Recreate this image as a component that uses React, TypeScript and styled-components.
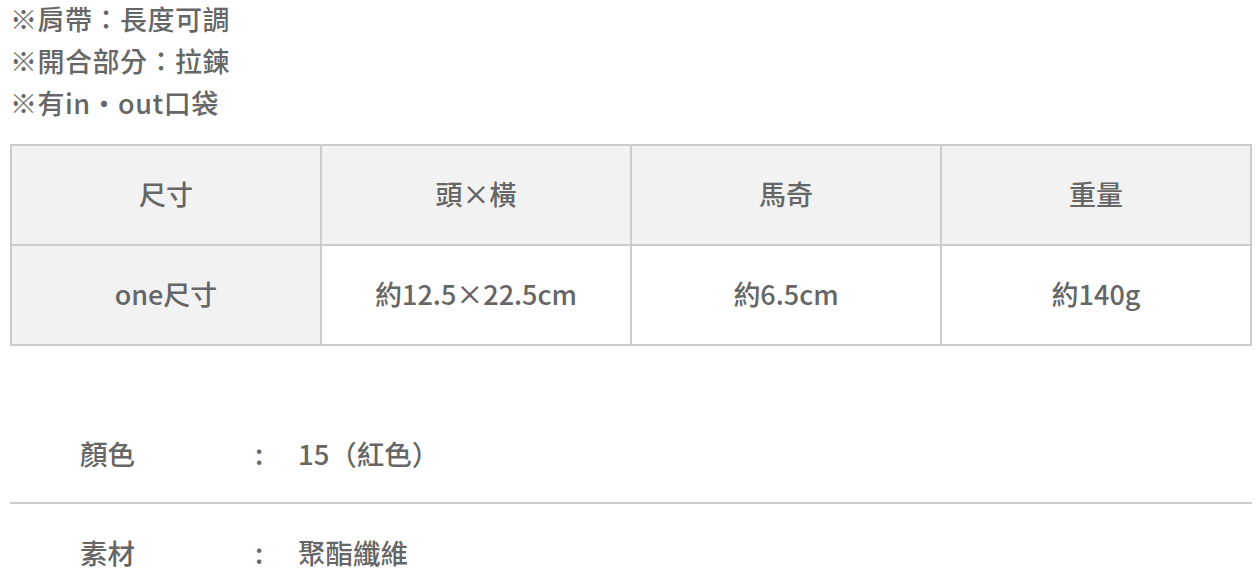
import React from 'react';
import styled, { createGlobalStyle } from 'styled-components';

const GlobalStyle = createGlobalStyle`
  html, body {
    margin: 0;
    padding: 0;
    background: #fff;
  }
  body {
    font-family: "Noto Sans CJK TC", "Noto Sans", sans-serif;
    color: #666;
  }
`;

const Page = styled.div`
  padding: 0 6px 0 10px;
`;

const NoteList = styled.ul`
  list-style: none;
  margin: -2px 0 0;
  padding: 0;
`;

const Note = styled.li`
  font-size: 27px;
  font-weight: 500;
  line-height: 42px;
  letter-spacing: 0.5px;
`;

const SpecTable = styled.table`
  width: 100%;
  margin-top: 20px;
  border-collapse: collapse;
  table-layout: fixed;
  border: 2px solid #ccc;
`;

const Cell = styled.td<{ $shaded?: boolean }>`
  height: 94px;
  padding: 0 0 4px;
  border: 2px solid #ccc;
  background: ${({ $shaded }) => ($shaded ? '#f2f2f2' : '#fff')};
  text-align: center;
  vertical-align: middle;
  font-size: 27px;
  font-weight: 500;
`;

const InfoList = styled.dl`
  margin: 59px 0 0;
`;

const InfoRow = styled.div`
  display: flex;
  align-items: center;
  height: 96px;
  padding-left: 70px;
  font-size: 27.5px;
  font-weight: 500;
`;

const Divider = styled.hr`
  margin: 1px 0 0;
  border: none;
  border-top: 2px solid #ccc;
`;

const InfoLabel = styled.dt`
  width: 175px;
`;

const Colon = styled.span`
  width: 43px;
`;

const InfoValue = styled.dd`
  margin: 0;
`;

const notes = ['※肩帶：長度可調', '※開合部分：拉鍊', '※有in・out口袋'];

const headers = ['尺寸', '頭×橫', '馬奇', '重量'];
const values = ['one尺寸', '約12.5×22.5cm', '約6.5cm', '約140g'];

const info = [
  { label: '顏色', value: '15（紅色）' },
  { label: '素材', value: '聚酯纖維' },
];

export default function App() {
  return (
    <Page>
      <GlobalStyle />
      <NoteList>
        {notes.map((n) => (
          <Note key={n}>{n}</Note>
        ))}
      </NoteList>

      <SpecTable>
        <tbody>
          <tr>
            {headers.map((h) => (
              <Cell key={h} $shaded>
                {h}
              </Cell>
            ))}
          </tr>
          <tr>
            {values.map((v, i) => (
              <Cell key={v} $shaded={i === 0}>
                {v}
              </Cell>
            ))}
          </tr>
        </tbody>
      </SpecTable>

      <InfoList>
        {info.map((row, i) => (
          <React.Fragment key={row.label}>
            {i > 0 && <Divider />}
            <InfoRow>
              <InfoLabel>{row.label}</InfoLabel>
              <Colon>:</Colon>
              <InfoValue>{row.value}</InfoValue>
            </InfoRow>
          </React.Fragment>
        ))}
      </InfoList>
    </Page>
  );
}
